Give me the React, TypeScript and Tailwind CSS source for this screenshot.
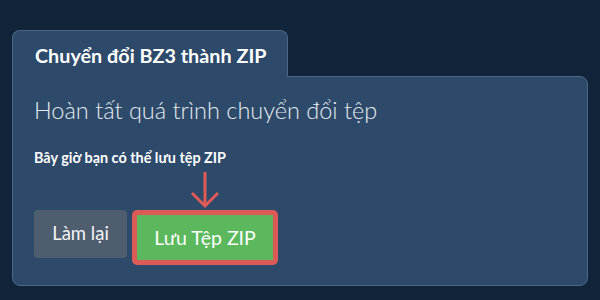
import React from "react";

export default function App() {
  return (
    <div
      className="w-[600px] h-[300px] bg-[#12243a] pt-[30px] px-[12px] flex flex-col"
      style={{ fontFamily: "Lato, 'Noto Sans', sans-serif" }}
    >
      <div className="flex">
        <div className="w-[276px] h-[47px] bg-[#2d4a6a] border border-b-0 border-[#4d6886] rounded-t-[8px] pl-[22px] pt-[12px] relative z-10 -mb-px">
          <span className="text-white font-bold text-[19.8px] leading-[24px] block">
            Chuyển đổi BZ3 thành ZIP
          </span>
        </div>
      </div>
      <div className="w-[576px] h-[210px] bg-[#2d4a6a] border border-[#4d6886] rounded-b-[8px] rounded-tr-[8px] pl-[21px] pt-[18px]">
        <div className="text-[#e6eaef] font-light text-[23.5px] leading-[30px]">
          Hoàn tất quá trình chuyển đổi tệp
        </div>
        <div className="mt-[24px] text-white font-bold text-[14.4px] leading-[18px]">
          Bây giờ bạn có thể lưu tệp ZIP
        </div>
        <div className="flex items-start mt-[43px]">
          <div className="w-[93px] h-[48px] rounded-[4px] bg-[#4f5e6f] text-[#f2f4f7] text-[18.5px] flex items-center justify-center">
            Làm lại
          </div>
          <div className="ml-[5px] relative">
            <svg
              width="30"
              height="38"
              viewBox="0 0 30 38"
              className="absolute left-[58px] top-[-38px]"
            >
              <path d="M15 0 L15 33" stroke="#e05a56" strokeWidth="3" fill="none" />
              <path d="M2 21 L15 34 L28 21" stroke="#e05a56" strokeWidth="3" fill="none" />
            </svg>
            <div className="w-[146px] h-[55px] border-[5px] border-[#dc5b57] rounded-[5px] bg-[#5cb85c] text-white text-[19.5px] flex items-center justify-center">
              Lưu Tệp ZIP
            </div>
          </div>
        </div>
      </div>
    </div>
  );
}
